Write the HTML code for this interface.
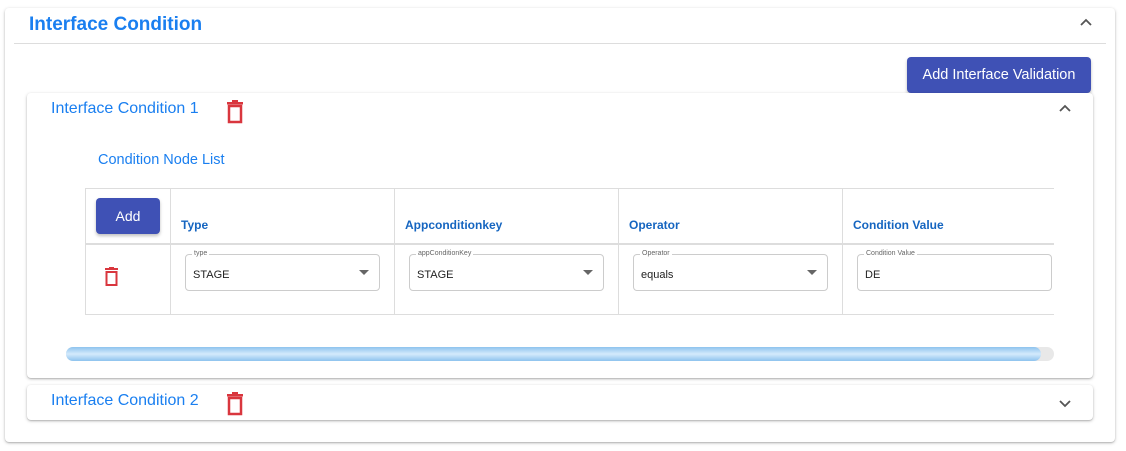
<!DOCTYPE html>
<html><head><style>
*{box-sizing:border-box;margin:0;padding:0}
body{width:1126px;height:451px;background:#fff;font-family:"Liberation Sans",Roboto,sans-serif;position:relative;overflow:hidden}
.abs{position:absolute}
.card{background:#fff;border-radius:4px;box-shadow:0 1px 3px rgba(0,0,0,.25),0 1px 1px rgba(0,0,0,.12)}
.blue{color:#1a7ff0}
.btn{background:#3f51b5;color:#fff;border-radius:4px;font-size:14px;display:flex;align-items:center;justify-content:center;box-shadow:0 2px 3px rgba(0,0,0,.25)}
.th{color:#1565c0;font-weight:bold;font-size:12px}
.field{border:1px solid #ccc;border-radius:4px;height:37px;font-size:11px;color:#222;padding:14px 0 0 7px}
.lab{position:absolute;top:-5px;left:6px;background:#fff;font-size:7px;color:#666;padding:0 2px}
.arrow{position:absolute;right:10px;top:15px;width:0;height:0;border-left:5px solid transparent;border-right:5px solid transparent;border-top:5px solid #666}
.line{background:#ddd}
</style></head><body>
<div class="abs card" style="left:5px;top:8px;width:1110px;height:434px"></div>
<div class="abs blue" style="left:29px;top:14px;font-size:19px;font-weight:bold">Interface Condition</div>
<svg class="abs" style="left:1079px;top:17px" width="14" height="10"><path d="M2 8 L7 3 L12 8" stroke="#555" stroke-width="1.8" fill="none"/></svg>
<div class="abs line" style="left:14px;top:43px;width:1092px;height:1px"></div>
<div class="abs btn" style="left:907px;top:57px;width:184px;height:36px;font-size:14.5px">Add Interface Validation</div>

<div class="abs card" style="left:27px;top:93px;width:1066px;height:285px"></div>
<div class="abs blue" style="left:51px;top:100px;font-size:16px">Interface Condition 1</div>
<svg class="abs" style="left:225px;top:100px" width="20" height="24"><rect x="2" y="2" width="16" height="2.5" fill="#d9363e"/><rect x="7" y="0" width="6" height="3" fill="#d9363e"/><rect x="4" y="6" width="12" height="16" fill="none" stroke="#d9363e" stroke-width="2.5"/></svg>
<svg class="abs" style="left:1058px;top:103px" width="14" height="10"><path d="M2 8 L7 3 L12 8" stroke="#555" stroke-width="1.8" fill="none"/></svg>
<div class="abs blue" style="left:98px;top:152px;font-size:14.5px">Condition Node List</div>

<div class="abs line" style="left:85px;top:188px;width:969px;height:1px"></div>
<div class="abs line" style="left:85px;top:243px;width:969px;height:2px"></div>
<div class="abs line" style="left:85px;top:314px;width:969px;height:1px"></div>
<div class="abs line" style="left:85px;top:188px;width:1px;height:127px"></div>
<div class="abs line" style="left:170px;top:188px;width:1px;height:127px"></div>
<div class="abs line" style="left:394px;top:188px;width:1px;height:127px"></div>
<div class="abs line" style="left:618px;top:188px;width:1px;height:127px"></div>
<div class="abs line" style="left:842px;top:188px;width:1px;height:127px"></div>
<div class="abs btn" style="left:96px;top:198px;width:64px;height:36px">Add</div>
<div class="abs th" style="left:181px;top:218px">Type</div>
<div class="abs th" style="left:405px;top:218px">Appconditionkey</div>
<div class="abs th" style="left:629px;top:218px">Operator</div>
<div class="abs th" style="left:853px;top:218px">Condition Value</div>
<svg class="abs" style="left:104px;top:267px" width="16" height="19"><rect x="1" y="1" width="13" height="2" fill="#d9363e"/><rect x="5" y="0" width="5" height="2" fill="#d9363e"/><rect x="2.5" y="5" width="10" height="13" fill="none" stroke="#d9363e" stroke-width="2"/></svg>

<div class="abs field" style="left:185px;top:254px;width:195px"><span class="lab">type</span>STAGE<span class="arrow"></span></div>
<div class="abs field" style="left:409px;top:254px;width:195px"><span class="lab">appConditionKey</span>STAGE<span class="arrow"></span></div>
<div class="abs field" style="left:633px;top:254px;width:195px"><span class="lab">Operator</span>equals<span class="arrow"></span></div>
<div class="abs field" style="left:857px;top:254px;width:195px"><span class="lab">Condition Value</span>DE</div>

<div class="abs" style="left:66px;top:347px;width:988px;height:14px;border-radius:7px;background:#e8e8e8"></div>
<div class="abs" style="left:66px;top:347px;width:975px;height:14px;border-radius:7px;background:linear-gradient(#8ec3ee,#d4eafc 50%,#8ec3ee)"></div>

<div class="abs card" style="left:27px;top:385px;width:1066px;height:35px"></div>
<div class="abs blue" style="left:51px;top:392px;font-size:16px">Interface Condition 2</div>
<svg class="abs" style="left:225px;top:392px" width="20" height="24"><rect x="2" y="2" width="16" height="2.5" fill="#d9363e"/><rect x="7" y="0" width="6" height="3" fill="#d9363e"/><rect x="4" y="6" width="12" height="16" fill="none" stroke="#d9363e" stroke-width="2.5"/></svg>
<svg class="abs" style="left:1058px;top:399px" width="14" height="10"><path d="M2 2 L7 7 L12 2" stroke="#555" stroke-width="1.8" fill="none"/></svg>
</body></html>
